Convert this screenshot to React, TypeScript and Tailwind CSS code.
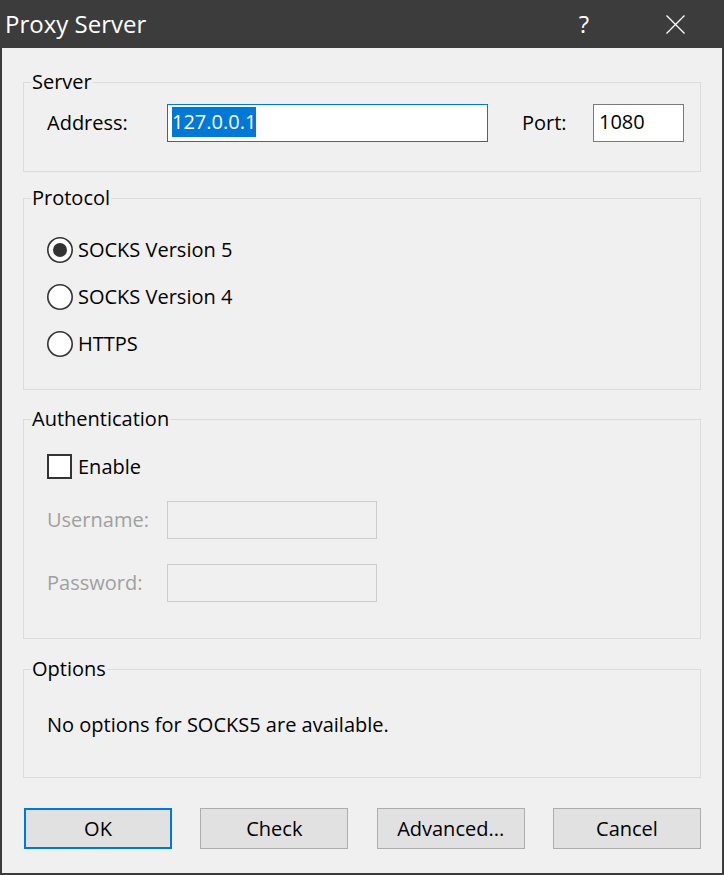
import type { ReactNode } from "react";

function Group({
  title,
  className,
  children,
}: {
  title: string;
  className?: string;
  children: ReactNode;
}) {
  return (
    <fieldset className={["min-w-0 border border-[#dcdcdc]", className ?? ""].join(" ")}>
      <legend className="ml-[7px] px-px text-[20px] leading-[24px] text-black">
        {title}
      </legend>
      {children}
    </fieldset>
  );
}

function Radio({ checked, label }: { checked?: boolean; label: string }) {
  return (
    <div className="flex h-[26px] items-center">
      <svg width="26" height="26" viewBox="0 0 26 26" className="shrink-0">
        <circle cx="13" cy="13" r="12.2" fill="#fff" stroke="#333" strokeWidth="1.6" />
        {checked && <circle cx="13" cy="13" r="7" fill="#333" />}
      </svg>
      <span className="ml-[5px] text-[20px] leading-[24px]">{label}</span>
    </div>
  );
}

function Button({ label, primary }: { label: string; primary?: boolean }) {
  return (
    <button
      className={[
        "flex h-[41px] w-[148px] items-center justify-center bg-[#e1e1e1] text-[20px] leading-[24px] text-black",
        primary ? "border-2 border-[#0078d7]" : "border border-[#adadad]",
      ].join(" ")}
    >
      {label}
    </button>
  );
}

export default function App() {
  return (
    <div className="flex h-[875px] w-[724px] flex-col bg-[#3c3c3c] font-['Open_Sans',sans-serif] text-black">
      {/* title bar */}
      <div className="flex h-[48px] shrink-0 items-center text-white">
        <span className="pl-[5px] text-[24px] leading-[30px]">Proxy Server</span>
        <span className="ml-auto w-[24px] text-center text-[24px] leading-[30px]">?</span>
        <div className="ml-[70px] mr-[39px] flex h-[19px] w-[19px] items-center justify-center">
          <svg width="19" height="19" viewBox="0 0 19 19">
            <path d="M0.5 0.5 L18.5 18.5 M18.5 0.5 L0.5 18.5" stroke="#fff" strokeWidth="1.3" />
          </svg>
        </div>
      </div>

      {/* body */}
      <div className="mx-[2px] mb-[2px] flex flex-1 flex-col bg-[#f0f0f0] px-[21px]">
        <Group title="Server" className="mt-[22px]">
          <div className="flex items-center pb-[29px] pl-[23px] pt-[10px]">
            <span className="w-[120px] text-[20px] leading-[24px]">Address:</span>
            <div className="h-[38px] w-[321px] border border-[#0078d7] bg-white pl-[4px] pt-[2px]">
              <span className="inline-block bg-[#0078d7] text-[20px] leading-[30px] text-white">
                127.0.0.1
              </span>
            </div>
            <span className="ml-[34px] w-[71px] text-[20px] leading-[24px]">Port:</span>
            <div className="h-[38px] w-[91px] border border-[#7a7a7a] bg-white pl-[5px] pt-[2px] text-[20px] leading-[30px]">
              1080
            </div>
          </div>
        </Group>

        <Group title="Protocol" className="mt-[14px]">
          <div className="flex flex-col gap-[21px] pb-[32px] pl-[23px] pt-[27px]">
            <Radio checked label="SOCKS Version 5" />
            <Radio label="SOCKS Version 4" />
            <Radio label="HTTPS" />
          </div>
        </Group>

        <Group title="Authentication" className="mt-[17px]">
          <div className="flex flex-col pb-[36px] pl-[23px] pt-[23px]">
            <div className="flex h-[25px] items-center">
              <div className="h-[25px] w-[25px] border-2 border-[#333] bg-white" />
              <span className="ml-[6px] text-[20px] leading-[24px]">Enable</span>
            </div>
            <div className="mt-[22px] flex items-center">
              <span className="w-[120px] text-[20px] leading-[24px] text-[#a0a0a0]">Username:</span>
              <div className="h-[38px] w-[210px] border border-[#cccccc] bg-[#f0f0f0]" />
            </div>
            <div className="mt-[25px] flex items-center">
              <span className="w-[120px] text-[20px] leading-[24px] text-[#a0a0a0]">Password:</span>
              <div className="h-[38px] w-[210px] border border-[#cccccc] bg-[#f0f0f0]" />
            </div>
          </div>
        </Group>

        <Group title="Options" className="mt-[18px]">
          <p className="pb-[40px] pl-[23px] pt-[32px] text-[20px] leading-[24px]">
            No options for SOCKS5 are available.
          </p>
        </Group>

        <div className="mt-[30px] flex justify-between pl-px">
          <Button label="OK" primary />
          <Button label="Check" />
          <Button label="Advanced..." />
          <Button label="Cancel" />
        </div>
      </div>
    </div>
  );
}
